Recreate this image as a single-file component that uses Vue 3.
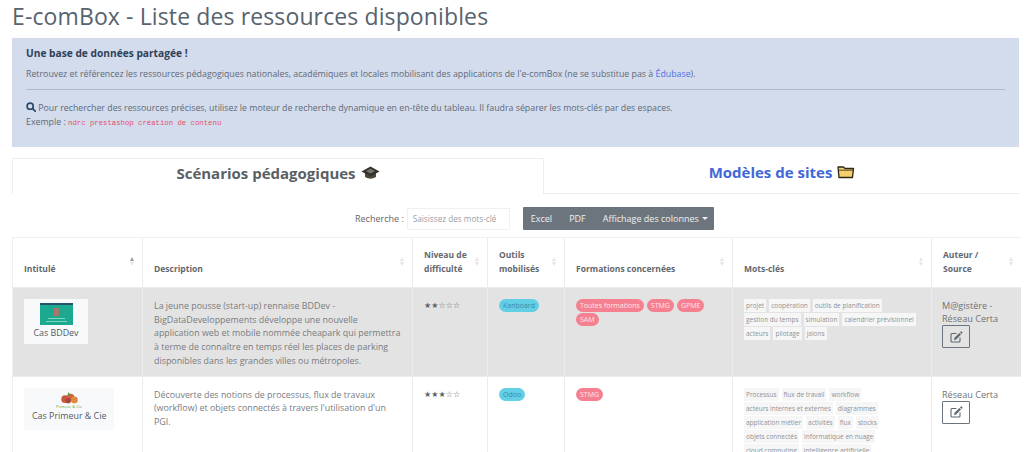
<template>
  <div class="page">
    <h1 class="title">E-comBox - Liste des ressources disponibles</h1>

    <div class="alert">
      <h4 class="alert-title">Une base de données partagée !</h4>
      <p class="alert-line">
        Retrouvez et référencez les ressources pédagogiques nationales, académiques et locales mobilisant des applications de l'e-comBox (ne se substitue pas à <a class="link">Édubase</a>).
      </p>
      <hr class="alert-sep" />
      <p class="alert-line">
        <svg class="search-icon" width="10" height="10" viewBox="0 0 12 12">
          <circle cx="5" cy="5" r="3.7" fill="none" stroke="#2c4a6e" stroke-width="2" />
          <line x1="8" y1="8" x2="11" y2="11" stroke="#2c4a6e" stroke-width="2.2" stroke-linecap="round" />
        </svg>
        Pour rechercher des ressources précises, utilisez le moteur de recherche dynamique en en-tête du tableau. Il faudra séparer les mots-clés par des espaces.
      </p>
      <p class="alert-line">Exemple : <code class="code">ndrc prestashop création de contenu</code></p>
    </div>

    <div class="tabs">
      <div class="tab active">
        Scénarios pédagogiques
        <svg width="19" height="14" viewBox="0 0 19 14">
          <path d="M4 7 L4 11 Q9.5 14.5 15 11 L15 7 Z" fill="#4e473c" />
          <path d="M0.5 5.5 L9.5 0.5 L18.5 5.5 L9.5 10.5 Z" fill="#34332f" />
          <path d="M5 5 L9.5 2.7 L14 5 L9.5 7.6 Z" fill="#77766c" />
        </svg>
      </div>
      <div class="tab other">
        Modèles de sites
        <svg width="18" height="14" viewBox="0 0 18 14">
          <path d="M2 12.5 L1 2 L6.5 2 L8 3.5 L16.5 3.5 L15.5 12.5 Z" fill="#f6cf6d" stroke="#2d2716" stroke-width="1.3" stroke-linejoin="round" />
          <path d="M2 5.2 L16.5 5.2" stroke="#2d2716" stroke-width="0.8" />
        </svg>
      </div>
    </div>

    <div class="toolbar">
      <label class="search-label">Recherche :</label>
      <input class="search-input" placeholder="Saisissez des mots-clés" />
      <div class="btn-group">
        <span>Excel</span>
        <span>PDF</span>
        <span>Affichage des colonnes <i class="caret"></i></span>
      </div>
    </div>

    <table class="grid">
      <colgroup>
        <col v-for="w in widths" :key="w" :style="{ width: w + 'px' }" />
      </colgroup>
      <thead>
        <tr>
          <th v-for="(h, i) in headers" :key="h">
            <span class="th-text">{{ h }}</span>
            <span class="sort">
              <i class="up" :class="{ on: i === 0 }"></i>
              <i class="down"></i>
            </span>
          </th>
        </tr>
      </thead>
      <tbody>
        <tr v-for="row in rows" :key="row.name" :class="{ shaded: row.shaded }">
          <td>
            <div class="thumb" :class="row.thumb">
              <svg v-if="row.thumb === 'bddev'" width="33" height="22" viewBox="0 0 33 22">
                <rect width="33" height="22" fill="#1ba98f" />
                <rect width="33" height="2" fill="#24536a" />
                <rect x="14" y="5" width="5" height="8" fill="#a9776e" />
                <rect x="8" y="15" width="17" height="1" fill="#7fd6bf" />
                <rect x="6" y="18" width="21" height="1" fill="#7fd6bf" />
              </svg>
              <div v-else class="primeur-logo">
                <svg width="20" height="12" viewBox="0 0 26 15">
                  <circle cx="8" cy="9" r="5" fill="#c9573c" />
                  <circle cx="15" cy="7" r="5" fill="#d0633f" />
                  <circle cx="20" cy="10" r="4.4" fill="#e2883f" />
                  <circle cx="12" cy="11" r="3.4" fill="#a8453a" />
                  <path d="M12 0 L15.5 3.5 L11 5 Z" fill="#5f9a3c" />
                </svg>
                <span class="primeur-mark">Primeur &amp; Cie</span>
              </div>
              <span class="thumb-name">{{ row.name }}</span>
            </div>
          </td>
          <td class="desc">{{ row.desc }}</td>
          <td class="stars">{{ row.stars }}</td>
          <td>
            <span v-for="t in row.tools" :key="t" class="pill tool">{{ t }}</span>
          </td>
          <td class="pills">
            <span v-for="f in row.formations" :key="f" class="pill formation">{{ f }}</span>
          </td>
          <td class="keywords">
            <span v-for="k in row.keywords" :key="k" class="kw">{{ k }}</span>
          </td>
          <td class="author">
            {{ row.author }}
            <a class="open-btn">
              <svg width="13" height="12" viewBox="0 0 13 12">
                <path d="M10 6.5 L10 10 Q10 11 9 11 L2 11 Q1 11 1 10 L1 3.5 Q1 2.5 2 2.5 L6.5 2.5" fill="none" stroke="#5f6870" stroke-width="1.1" />
                <path d="M4.5 6.8 L4 8.9 L6.1 8.4 L11 3.5 L9.4 1.9 Z" fill="#5f6870" />
                <path d="M10 1.3 L10.8 0.5 Q11.2 0.2 11.6 0.5 L12.4 1.3 Q12.7 1.7 12.4 2.1 L11.6 2.9 Z" fill="#5f6870" />
              </svg>
            </a>
          </td>
        </tr>
      </tbody>
    </table>
  </div>
</template>

<script setup>
const widths = [130, 270, 75, 77, 168, 199, 89]

const headers = [
  'Intitulé',
  'Description',
  'Niveau de difficulté',
  'Outils mobilisés',
  'Formations concernées',
  'Mots-clés',
  'Auteur / Source'
]

const rows = [
  {
    name: 'Cas BDDev',
    thumb: 'bddev',
    shaded: true,
    desc: 'La jeune pousse (start-up) rennaise BDDev - BigDataDeveloppements développe une nouvelle application web et mobile nommée cheapark qui permettra à terme de connaître en temps réel les places de parking disponibles dans les grandes villes ou métropoles.',
    stars: '★★☆☆☆',
    tools: ['Kanboard'],
    formations: ['Toutes formations', 'STMG', 'GPME', 'SAM'],
    keywords: ['projet', 'coopération', 'outils de planification', 'gestion du temps', 'simulation', 'calendrier prévisionnel', 'acteurs', 'pilotage', 'jalons'],
    author: 'M@gistère - Réseau Certa'
  },
  {
    name: 'Cas Primeur & Cie',
    thumb: 'primeur',
    shaded: false,
    desc: "Découverte des notions de processus, flux de travaux (workflow) et objets connectés à travers l'utilisation d'un PGI.",
    stars: '★★★☆☆',
    tools: ['Odoo'],
    formations: ['STMG'],
    keywords: ['Processus', 'flux de travail', 'workflow', 'acteurs internes et externes', 'diagrammes', 'application métier', 'activités', 'flux', 'stocks', 'objets connectés', 'informatique en nuage', 'cloud computing', 'intelligence artificielle'],
    author: 'Réseau Certa'
  }
]
</script>

<style>
html,
body {
  margin: 0;
  background: #fff;
}
</style>

<style scoped>
.page {
  height: 452px;
  overflow: hidden;
  box-sizing: border-box;
  padding: 0 4px 0 12px;
  font-family: "Open Sans", "Noto Sans", sans-serif;
  color: #6b7178;
}

.title {
  margin: 0;
  height: 38px;
  padding-top: 2px;
  box-sizing: border-box;
  font-size: 23px;
  line-height: 28px;
  font-weight: 400;
  letter-spacing: 0.12px;
  color: #57636e;
}

.alert {
  width: 1007px;
  height: 109px;
  box-sizing: border-box;
  padding: 8px 14px 0;
  background: #d3dcec;
  color: #5f6977;
}

.alert-title {
  margin: 0 0 7px;
  font-size: 10.2px;
  line-height: 14px;
  font-weight: 700;
  color: #2f4058;
}

.alert-line {
  margin: 0;
  font-size: 8.8px;
  line-height: 14px;
}

.alert-sep {
  margin: 8px 0 11px;
  border: 0;
  border-top: 1px solid #aeb8d0;
}

.search-icon {
  vertical-align: -1px;
}

.link {
  color: #4f6fe0;
}

.code {
  font-family: "Liberation Mono", monospace;
  font-size: 7.3px;
  color: #e2506c;
}

.tabs {
  display: flex;
  width: 1008px;
  height: 36px;
  margin-top: 11px;
}

.tab {
  display: flex;
  align-items: center;
  justify-content: center;
  gap: 5px;
  box-sizing: border-box;
  padding-bottom: 7px;
  font-size: 15px;
  font-weight: 700;
}

.tab.active {
  width: 532px;
  color: #5a5f65;
  border: 1px solid #eeeeee;
  border-bottom: 0;
}

.tab.other {
  flex: 1;
  color: #4167d9;
  border-bottom: 1px solid #eeeeee;
}

.toolbar {
  display: flex;
  align-items: center;
  height: 23px;
  margin-top: 13px;
  padding-left: 343px;
}

.search-label {
  font-size: 9px;
  margin-right: 3px;
  color: #666;
}

.search-input {
  width: 103px;
  height: 22px;
  box-sizing: border-box;
  padding: 0 13px 0 5px;
  border: 1px solid #f0f0f0;
  font-family: inherit;
  font-size: 8.2px;
  outline: none;
}

.search-input::placeholder {
  color: #9a9ea3;
}

.btn-group {
  display: flex;
  align-items: center;
  gap: 17px;
  height: 23px;
  box-sizing: border-box;
  margin-left: 13px;
  padding: 0 8px;
  width: 191px;
  background: #6c757d;
  border-radius: 1px;
  color: #eef0f2;
  font-size: 9px;
  white-space: nowrap;
}

.caret {
  display: inline-block;
  margin-left: 1px;
  vertical-align: 2px;
  border-top: 3px solid #eef0f2;
  border-left: 3px solid transparent;
  border-right: 3px solid transparent;
}

.grid {
  width: 1008px;
  margin-top: 7px;
  table-layout: fixed;
  border-collapse: collapse;
}

.grid th,
.grid td {
  border: 1px solid #ececec;
  border-top-color: #f0f0f0;
}

.grid th:first-child,
.grid td:first-child {
  border-left-color: #f0f0f0;
}

.grid th:last-child,
.grid td:last-child {
  border-right: 0;
}

.grid th {
  position: relative;
  height: 50px;
  box-sizing: border-box;
  padding: 0 14px 11px 11px;
  vertical-align: bottom;
  text-align: left;
  font-size: 8.5px;
  line-height: 14px;
  font-weight: 700;
  color: #63686e;
}

.sort {
  position: absolute;
  right: 8px;
  top: 19px;
  display: flex;
  flex-direction: column;
  gap: 1px;
}

.sort i {
  display: block;
  border-left: 2.5px solid transparent;
  border-right: 2.5px solid transparent;
}

.sort .up {
  border-bottom: 4px solid #e6e6e6;
}

.sort .up.on {
  border-bottom-color: #9a9a9a;
}

.sort .down {
  border-top: 4px solid #e6e6e6;
}

.grid td {
  padding: 11px 11px 8px;
  vertical-align: top;
  font-size: 8.9px;
  line-height: 13.7px;
  color: #787c80;
}

.shaded td {
  background: #e3e3e3;
}

.grid td.desc {
  padding-right: 9px;
}

.thumb {
  display: inline-block;
  background: #f8f9fa;
  text-align: center;
  padding: 0 8px;
  color: #555;
}

.thumb.bddev {
  width: 48px;
  height: 40px;
  padding: 4px 8px 1px;
  margin-top: 0;
}

.thumb.bddev svg {
  display: block;
  margin: 0 auto 1px;
}

.thumb.primeur {
  width: 74px;
  height: 42px;
  white-space: nowrap;
}

.primeur-logo {
  display: flex;
  flex-direction: column;
  align-items: center;
  line-height: 1;
  padding-top: 4px;
}

.primeur-logo svg {
  display: block;
}

.primeur-mark {
  font-size: 4px;
  line-height: 5px;
  color: #5fa93a;
}

.thumb-name {
  display: block;
  font-size: 8.9px;
  line-height: 13px;
  color: #55595d;
}

.stars {
  font-family: "DejaVu Sans", sans-serif;
  font-size: 8px !important;
  letter-spacing: 0.1px;
  color: #5c636a !important;
}

.pill {
  display: inline-block;
  height: 13px;
  padding: 0 4px;
  margin: 0 3px 1px 0;
  border-radius: 7px;
  font-size: 7px;
  line-height: 13px;
  white-space: nowrap;
  vertical-align: top;
}

.tool {
  background: #62cfe5;
  color: #3f8aa8;
}

.formation {
  background: #f5808f;
  color: #fbe6e8;
}

.keywords {
  padding-right: 4px !important;
  line-height: 14px !important;
}

.kw {
  display: inline-block;
  padding: 0 2px;
  margin: 0 3px 1px 0;
  height: 13px;
  background: #f6f6f6;
  font-size: 6.5px;
  line-height: 13px;
  color: #8f9296;
  white-space: nowrap;
  vertical-align: top;
}

.author {
  font-size: 9.1px !important;
  line-height: 13.2px !important;
  color: #6e7276 !important;
  padding-left: 10px !important;
  padding-right: 4px !important;
}

.open-btn {
  display: flex;
  align-items: center;
  justify-content: center;
  width: 28px;
  height: 23px;
  box-sizing: border-box;
  border: 1px solid #6c757d;
  border-radius: 1px;
  background: #fff;
}

.shaded .open-btn {
  background: transparent;
}
</style>
